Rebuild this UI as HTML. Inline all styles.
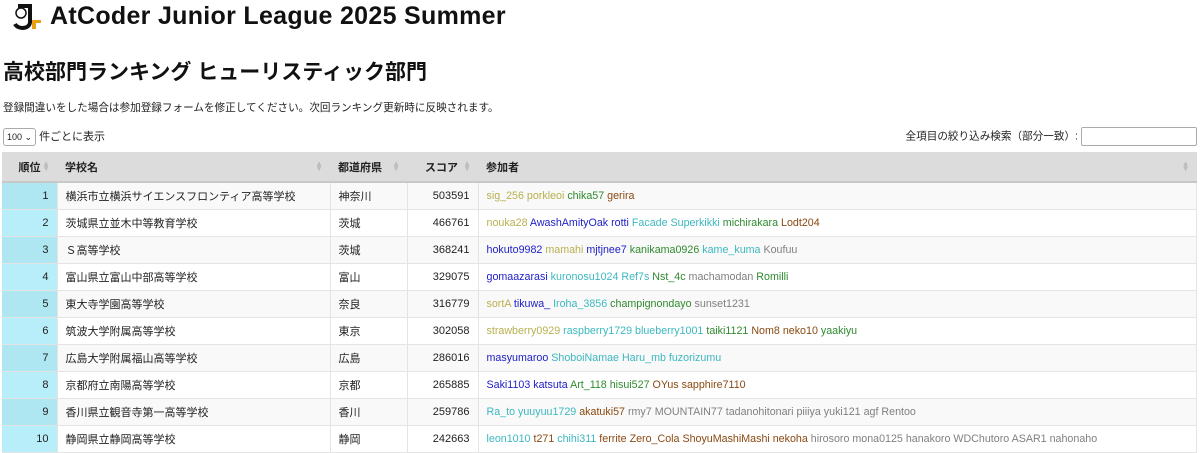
<!DOCTYPE html>
<html><head><meta charset="utf-8"><style>
body{margin:0;background:#fff;font-family:"Liberation Sans","Noto Sans CJK JP",sans-serif;color:#222;width:1200px;height:453px;overflow:hidden;position:relative}
.logo{position:absolute;left:10px;top:2px}
.brand{position:absolute;left:50px;top:0px;font-size:25px;font-weight:bold;letter-spacing:0.3px;color:#111;white-space:nowrap;line-height:32px}
h1{position:absolute;left:3px;top:56px;margin:0;font-size:21px;font-weight:bold;color:#111;white-space:nowrap}
.note{position:absolute;left:3px;top:100px;font-size:10.6px;color:#222}
.len{position:absolute;left:3px;top:128px;font-size:11px}
.len span.sel{display:inline-block;border:1px solid #aaa;border-radius:3px;padding:1px 3px;font-size:9px;height:14px;line-height:14px;vertical-align:middle;margin-right:3px}
.filter{position:absolute;right:3px;top:127px;font-size:10.6px}
.filter span.in{display:inline-block;width:114px;height:17px;border:1px solid #aaa;border-radius:2px;vertical-align:middle;margin-left:3px}
table{position:absolute;left:2px;top:152px;width:1195px;border-collapse:collapse;font-size:11px;table-layout:fixed}
th{background:#dcdcdc;height:29px;text-align:left;font-weight:bold;padding:0 8px;border-bottom:2px solid #c8c8c8;position:relative}
th .s{position:absolute;right:7px;top:9px;color:#bbb;font-size:8px;line-height:5px}
td{height:26px;padding:0 8px;border-bottom:1px solid #e4e4e4;border-right:1px solid #e4e4e4;white-space:nowrap;overflow:hidden}
tr.o td{background:#f9f9f9}
td.r{text-align:right;background:#aee6f2!important}
tr.e td.r{background:#b8eefa!important}
td.sc{text-align:right}
td.p{font-size:10.7px}
.g{color:#808080}.b{color:#8a4a10}.gr{color:#2f8a2f}.c{color:#3cb8c0}.bl{color:#2020c8}.y{color:#b8b050}
</style></head><body>
<svg class="logo" width="34" height="30" viewBox="0 0 34 30"><path d="M8 4 H20 V20 C20 27 8 28 5 22" fill="none" stroke="#111" stroke-width="4"/><circle cx="11" cy="11" r="5" fill="none" stroke="#111" stroke-width="1.5"/><rect x="22" y="18" width="4" height="9" fill="#e8a010"/><rect x="22" y="18" width="9" height="3" fill="#e8a010"/></svg>
<div class="brand">AtCoder Junior League 2025 Summer</div>
<h1>高校部門ランキング ヒューリスティック部門</h1>
<div class="note">登録間違いをした場合は参加登録フォームを修正してください。次回ランキング更新時に反映されます。</div>
<div class="len"><span class="sel">100 ⌄</span>件ごとに表示</div>
<div class="filter">全項目の絞り込み検索（部分一致）:<span class="in"></span></div>
<table>
<colgroup><col style="width:55px"><col style="width:273px"><col style="width:77px"><col style="width:71px"><col></colgroup>
<tr><th style="text-align:center">順位<span class="s">▲<br>▼</span></th><th>学校名<span class="s">▲<br>▼</span></th><th>都道府県<span class="s">▲<br>▼</span></th><th style="text-align:right;padding-right:20px">スコア<span class="s">▲<br>▼</span></th><th>参加者<span class="s">▲<br>▼</span></th></tr>
<tr class="o"><td class="r">1</td><td>横浜市立横浜サイエンスフロンティア高等学校</td><td>神奈川</td><td class="sc">503591</td><td class="p"><span class="y">sig_256 porkleoi</span> <span class="gr">chika57</span> <span class="b">gerira</span></td></tr>
<tr class="e"><td class="r">2</td><td>茨城県立並木中等教育学校</td><td>茨城</td><td class="sc">466761</td><td class="p"><span class="y">nouka28</span> <span class="bl">AwashAmityOak rotti</span> <span class="c">Facade Superkikki</span> <span class="gr">michirakara</span> <span class="b">Lodt204</span></td></tr>
<tr class="o"><td class="r">3</td><td>Ｓ高等学校</td><td>茨城</td><td class="sc">368241</td><td class="p"><span class="bl">hokuto9982</span> <span class="y">mamahi</span> <span class="bl">mjtjnee7</span> <span class="gr">kanikama0926</span> <span class="c">kame_kuma</span> <span class="g">Koufuu</span></td></tr>
<tr class="e"><td class="r">4</td><td>富山県立富山中部高等学校</td><td>富山</td><td class="sc">329075</td><td class="p"><span class="bl">gomaazarasi</span> <span class="c">kuronosu1024 Ref7s</span> <span class="gr">Nst_4c</span> <span class="g">machamodan</span> <span class="gr">Romilli</span></td></tr>
<tr class="o"><td class="r">5</td><td>東大寺学園高等学校</td><td>奈良</td><td class="sc">316779</td><td class="p"><span class="y">sortA</span> <span class="bl">tikuwa_</span> <span class="c">Iroha_3856</span> <span class="gr">champignondayo</span> <span class="g">sunset1231</span></td></tr>
<tr class="e"><td class="r">6</td><td>筑波大学附属高等学校</td><td>東京</td><td class="sc">302058</td><td class="p"><span class="y">strawberry0929</span> <span class="c">raspberry1729 blueberry1001</span> <span class="gr">taiki1121</span> <span class="b">Nom8 neko10</span> <span class="gr">yaakiyu</span></td></tr>
<tr class="o"><td class="r">7</td><td>広島大学附属福山高等学校</td><td>広島</td><td class="sc">286016</td><td class="p"><span class="bl">masyumaroo</span> <span class="c">ShoboiNamae Haru_mb fuzorizumu</span></td></tr>
<tr class="e"><td class="r">8</td><td>京都府立南陽高等学校</td><td>京都</td><td class="sc">265885</td><td class="p"><span class="bl">Saki1103 katsuta</span> <span class="gr">Art_118 hisui527</span> <span class="b">OYus sapphire7110</span></td></tr>
<tr class="o"><td class="r">9</td><td>香川県立観音寺第一高等学校</td><td>香川</td><td class="sc">259786</td><td class="p"><span class="c">Ra_to yuuyuu1729</span> <span class="b">akatuki57</span> <span class="g">rmy7 MOUNTAIN77 tadanohitonari piiiya yuki121 agf Rentoo</span></td></tr>
<tr class="e"><td class="r">10</td><td>静岡県立静岡高等学校</td><td>静岡</td><td class="sc">242663</td><td class="p"><span class="c">leon1010</span> <span class="b">t271</span> <span class="c">chihi311</span> <span class="b">ferrite Zero_Cola ShoyuMashiMashi nekoha</span> <span class="g">hirosoro mona0125 hanakoro WDChutoro ASAR1 nahonaho</span></td></tr>
</table>
</body></html>
